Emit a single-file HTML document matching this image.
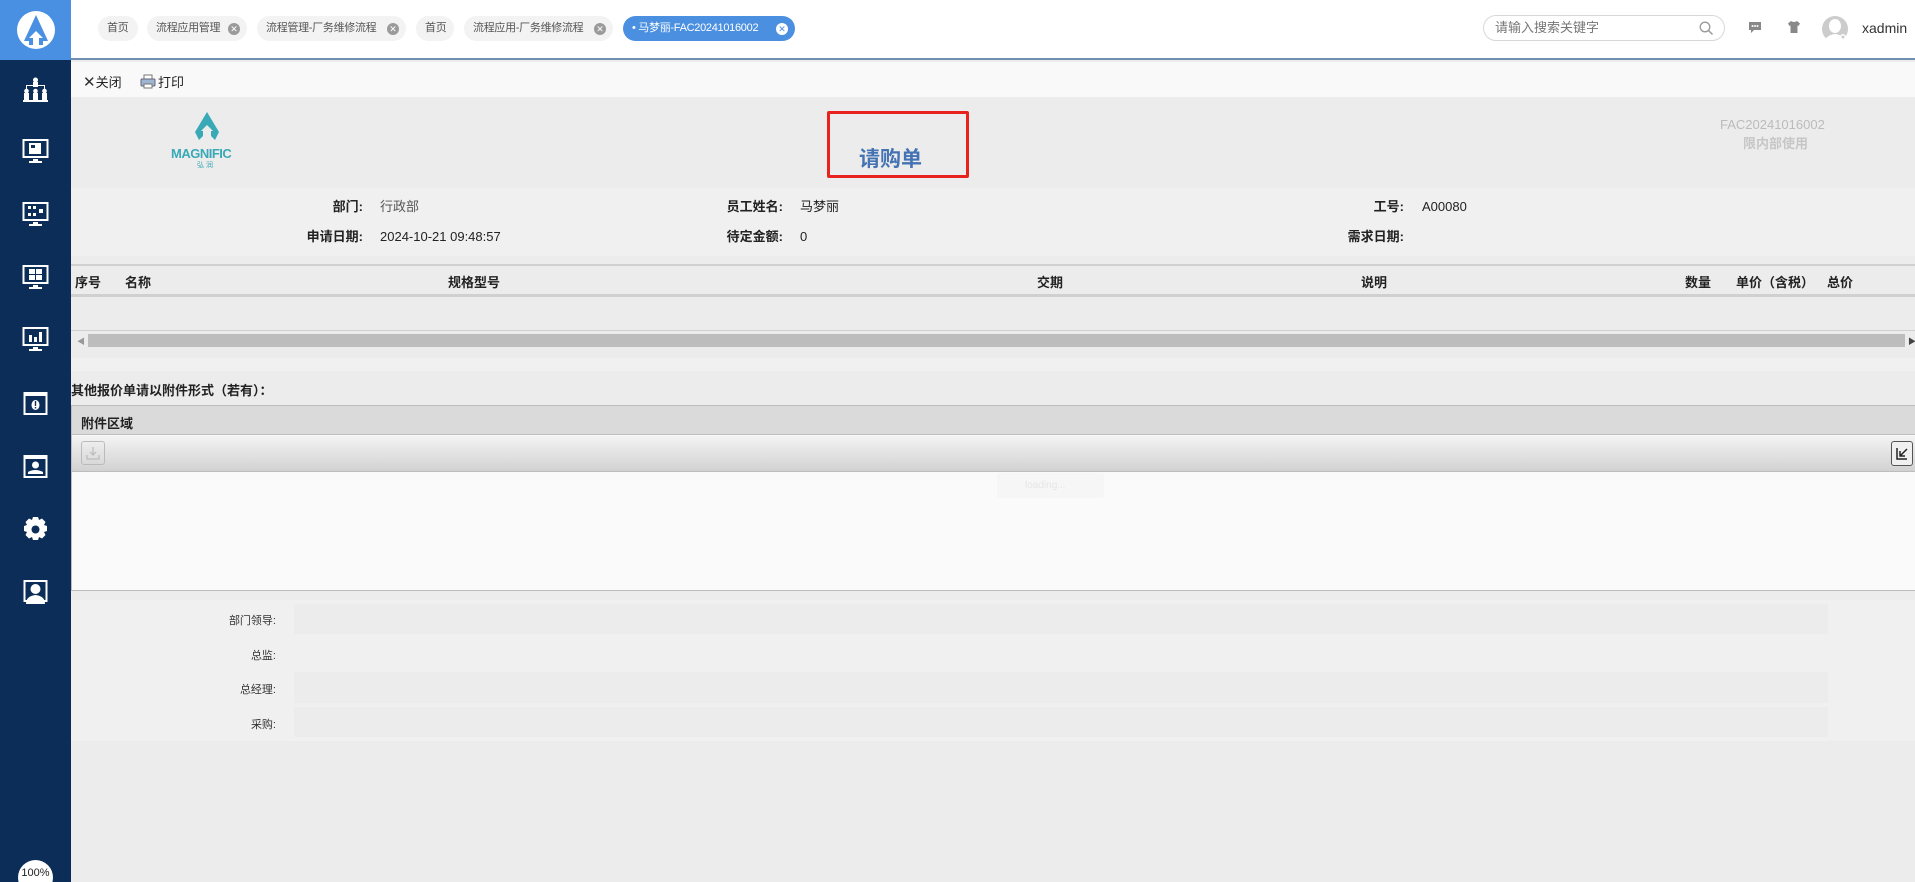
<!DOCTYPE html>
<html style="background:#ececec"><head><meta charset="utf-8">
<style>
*{margin:0;padding:0;box-sizing:border-box}
html,body{width:1915px;height:882px;overflow:hidden}
body{background:#ececec;font-family:"Liberation Sans","Noto Sans CJK SC",sans-serif;font-size:13px;color:#222;position:relative}
.abs{position:absolute}
#side{left:0;top:0;width:71px;height:882px;background:#0b2d57}
#logo{left:0;top:0;width:71px;height:60px;background:#4a90e2}
#top{left:71px;top:0;width:1844px;height:60px;background:#fff;border-bottom:2px solid #6f8fb3}
.tab{position:absolute;top:16px;height:25px;border-radius:13px;background:#f3f3f3;color:#555;font-size:11px;line-height:25px;padding-left:9px;white-space:nowrap;letter-spacing:-0.3px}
.tab .x{position:absolute;right:7px;top:7px;width:12px;height:12px;border-radius:6px;background:#9a9a9a;color:#fff;font-size:9px;line-height:12px;text-align:center;letter-spacing:0}
.tab.act{background:#4a8fe0;color:#fff}
.tab.act .x{background:#fff;color:#4a8fe0}
.ico{position:absolute;left:22px;width:27px;height:27px}
.lbl{position:absolute;font-weight:bold;text-align:right;font-size:13px;line-height:16px}
.val{position:absolute;font-size:13px;line-height:16px}
.th{position:absolute;top:272px;font-weight:bold;font-size:13px}
.ap{position:absolute;right:1639px;font-size:11px;color:#333;text-align:right}
.box{position:absolute;left:294px;width:1534px;background:#ececec}
</style></head><body>
<div id="side" class="abs"></div>
<div id="logo" class="abs">
<svg class="abs" style="left:15px;top:9px" width="42" height="42" viewBox="0 0 42 42"><circle cx="21" cy="21" r="19" fill="#fff"/><path d="M21 6 L33 32 L28 32 L28 36 L14 36 L14 32 L9 32 Z" fill="#4a90e2"/><path d="M21 22 L28 29 L24 29 L24 36 L18 36 L18 29 L14 29 Z" fill="#fff"/></svg>
</div>
<svg class="ico" style="top:76px" viewBox="0 0 27 27" fill="#fff"><circle cx="13.5" cy="4" r="2.5"/><rect x="11" y="6" width="5" height="5"/><path d="M4 9h19v4h-1v-3H5v3H4z"/><circle cx="4.5" cy="15" r="2.3"/><circle cx="13.5" cy="15" r="2.3"/><circle cx="22.5" cy="15" r="2.3"/><rect x="2" y="17" width="5" height="7"/><rect x="11" y="17" width="5" height="7"/><rect x="20" y="17" width="5" height="7"/><rect x="1" y="24" width="25" height="2"/></svg>
<svg class="ico" style="top:138px" viewBox="0 0 27 27"><rect x="1.5" y="2" width="24" height="17" fill="none" stroke="#fff" stroke-width="2"/><rect x="7" y="5" width="12" height="11" fill="#fff"/><rect x="9" y="7" width="4" height="3" fill="#0b2d57"/><rect x="11" y="21" width="5" height="2" fill="#fff"/><rect x="7" y="23" width="13" height="2" fill="#fff"/></svg>
<svg class="ico" style="top:201px" viewBox="0 0 27 27" fill="#fff"><rect x="1.5" y="2" width="24" height="17" fill="none" stroke="#fff" stroke-width="2"/><rect x="6" y="5" width="3" height="3"/><rect x="11" y="5" width="3" height="3"/><rect x="6" y="12" width="3" height="3"/><rect x="11" y="12" width="3" height="3"/><rect x="17" y="8" width="4" height="4"/><rect x="11" y="21" width="5" height="2"/><rect x="7" y="23" width="13" height="2"/></svg>
<svg class="ico" style="top:264px" viewBox="0 0 27 27" fill="#fff"><rect x="1.5" y="2" width="24" height="17" fill="none" stroke="#fff" stroke-width="2"/><rect x="7" y="5" width="6" height="5"/><rect x="14" y="5" width="6" height="5"/><rect x="7" y="11" width="6" height="5"/><rect x="14" y="11" width="6" height="5"/><rect x="11" y="21" width="5" height="2"/><rect x="7" y="23" width="13" height="2"/></svg>
<svg class="ico" style="top:326px" viewBox="0 0 27 27" fill="#fff"><rect x="1.5" y="2" width="24" height="17" fill="none" stroke="#fff" stroke-width="2"/><rect x="7" y="9" width="3" height="7"/><rect x="12" y="11" width="3" height="5"/><rect x="17" y="6" width="3" height="10"/><rect x="11" y="21" width="5" height="2"/><rect x="7" y="23" width="13" height="2"/></svg>
<svg class="ico" style="top:390px" viewBox="0 0 27 27" fill="#fff"><rect x="2.5" y="3" width="22" height="21" fill="none" stroke="#fff" stroke-width="2"/><rect x="2" y="3" width="23" height="3"/><ellipse cx="13.5" cy="15" rx="4" ry="5"/><rect x="12.8" y="11" width="1.4" height="5" fill="#0b2d57"/><rect x="12.8" y="17" width="1.4" height="1.5" fill="#0b2d57"/></svg>
<svg class="ico" style="top:453px" viewBox="0 0 27 27" fill="#fff"><rect x="2.5" y="3" width="22" height="21" fill="none" stroke="#fff" stroke-width="2"/><rect x="2" y="3" width="23" height="3"/><circle cx="13.5" cy="12" r="3.5"/><path d="M6 19 q7 -4 15 0 l0 2 h-15z"/></svg>
<svg class="ico" style="top:516px" viewBox="0 0 27 27" fill="#fff"><path d="M11 1h5l1 3 3-1.5 3.5 3.5-1.5 3 3 1v5l-3 1 1.5 3-3.5 3.5-3-1.5-1 3h-5l-1-3-3 1.5-3.5-3.5 1.5-3-3-1v-5l3-1-1.5-3 3.5-3.5 3 1.5z"/><circle cx="13.5" cy="13.5" r="4" fill="#0b2d57"/></svg>
<svg class="ico" style="top:579px" viewBox="0 0 27 27" fill="#fff"><rect x="2.5" y="2" width="22" height="20" fill="none" stroke="#fff" stroke-width="2"/><circle cx="13.5" cy="10" r="5"/><path d="M4 25 q0-8 9.5-9 q9.5 1 9.5 9z"/></svg>
<div class="abs" style="left:18px;top:860px;width:35px;height:35px;border-radius:50%;background:#fff;color:#222;font-size:11px;text-align:center;line-height:26px">100%</div>

<div id="top" class="abs">
<div class="tab" style="left:27px;width:40px">首页</div>
<div class="tab" style="left:76px;width:100px">流程应用管理<span class="x">✕</span></div>
<div class="tab" style="left:186px;width:149px">流程管理-厂务维修流程<span class="x">✕</span></div>
<div class="tab" style="left:345px;width:38px">首页</div>
<div class="tab" style="left:393px;width:149px">流程应用-厂务维修流程<span class="x">✕</span></div>
<div class="tab act" style="left:552px;width:172px">• 马梦丽-FAC20241016002<span class="x">✕</span></div>
<div class="abs" style="left:1412px;top:15px;width:242px;height:26px;border:1px solid #d8d8d8;border-radius:13px;color:#777;font-size:13px;line-height:24px;padding-left:11px">请输入搜索关键字
<svg class="abs" style="right:10px;top:5px" width="15" height="15" viewBox="0 0 15 15"><circle cx="6" cy="6" r="4.8" fill="none" stroke="#999" stroke-width="1.3"/><path d="M9.5 9.5 L13.5 13.5" stroke="#999" stroke-width="1.5"/></svg></div>
<svg class="abs" style="left:1677px;top:21px" width="14" height="13" viewBox="0 0 14 13"><path d="M1 1h12v8H6l-3 3V9H1z" fill="#888"/><circle cx="4.5" cy="5" r="1" fill="#fff"/><circle cx="7" cy="5" r="1" fill="#fff"/><circle cx="9.5" cy="5" r="1" fill="#fff"/></svg>
<svg class="abs" style="left:1716px;top:20px" width="14" height="14" viewBox="0 0 14 14"><path d="M4 1 L1 3.5 L2.5 6 L3.5 5.5 V13 H10.5 V5.5 L11.5 6 L13 3.5 L10 1 Q7 3 4 1z" fill="#888"/></svg>
<svg class="abs" style="left:1750px;top:15px" width="28" height="28" viewBox="0 0 28 28"><circle cx="14" cy="14" r="13" fill="#ccc"/><ellipse cx="14" cy="11" rx="6" ry="7" fill="#fff"/><path d="M4 24 q10-10 20 0 q-10 8-20 0z" fill="#fff"/><circle cx="22" cy="22" r="3" fill="#fff"/><circle cx="22" cy="22" r="1.5" fill="#ccc"/></svg>
<div class="abs" style="left:1791px;top:20px;font-size:14px;color:#333">xadmin</div>
</div>

<div class="abs" style="left:71px;top:62px;width:1844px;height:35px;background:#f9f9f9"></div>
<div class="abs" style="left:83px;top:72px;font-size:13px;color:#222"><span style="font-size:15px;color:#333">✕</span>关闭</div>
<svg class="abs" style="left:140px;top:74px" width="16" height="15" viewBox="0 0 16 15"><rect x="4" y="1" width="8" height="5" fill="#fff" stroke="#777"/><rect x="1" y="5" width="14" height="7" rx="1" fill="#9fb6d3" stroke="#667"/><rect x="4" y="10" width="8" height="4" fill="#fff" stroke="#777"/></svg>
<div class="abs" style="left:158px;top:72px;font-size:13px">打印</div>

<div class="abs" style="left:71px;top:97px;width:1844px;height:91px;background:#ececec"></div>
<svg class="abs" style="left:193px;top:112px" width="28" height="31" viewBox="0 0 28 31"><path d="M14 0 L26 20 L22 28 L18 24 L18 19 L20 19 L14 13 L8 19 L10 19 L10 24 L6 28 L2 20 Z" fill="#3aa9b7"/></svg>
<div class="abs" style="left:171px;top:146px;width:70px;font-size:13px;font-weight:bold;color:#3aa9b7;letter-spacing:-0.5px">MAGNIFIC</div>
<div class="abs" style="left:197px;top:160px;font-size:7px;color:#3aa9b7">弘 润</div>
<div class="abs" style="left:827px;top:111px;width:142px;height:67px;border:3px solid #e8231e;border-radius:2px"></div>
<div class="abs" style="left:859px;top:143px;font-size:21px;font-weight:bold;color:#4473b3">请购单</div>
<div class="abs" style="left:1720px;top:117px;font-size:13px;color:#bbb">FAC20241016002</div>
<div class="abs" style="left:1743px;top:133px;font-size:13px;font-weight:bold;color:#c6c6c6">限内部使用</div>

<div class="abs" style="left:71px;top:188px;width:1844px;height:68px;background:#f0f0f0"></div>
<div class="lbl" style="right:1552px;top:199px">部门:</div><div class="val" style="left:380px;top:199px;color:#555">行政部</div>
<div class="lbl" style="right:1132px;top:199px">员工姓名:</div><div class="val" style="left:800px;top:199px">马梦丽</div>
<div class="lbl" style="right:511px;top:199px">工号:</div><div class="val" style="left:1422px;top:199px">A00080</div>
<div class="lbl" style="right:1552px;top:229px">申请日期:</div><div class="val" style="left:380px;top:229px">2024-10-21 09:48:57</div>
<div class="lbl" style="right:1132px;top:229px">待定金额:</div><div class="val" style="left:800px;top:229px">0</div>
<div class="lbl" style="right:511px;top:229px">需求日期:</div>

<div class="abs" style="left:71px;top:264px;width:1844px;height:33px;background:#ececec;border-top:2px solid #d0d0d0;border-bottom:3px solid #d0d0d0"></div>
<div class="th" style="left:75px">序号</div><div class="th" style="left:125px">名称</div><div class="th" style="left:448px">规格型号</div><div class="th" style="left:1037px">交期</div><div class="th" style="left:1361px">说明</div><div class="th" style="left:1685px">数量</div><div class="th" style="left:1736px">单价（含税）</div><div class="th" style="left:1827px">总价</div>
<div class="abs" style="left:71px;top:330px;width:1844px;height:1px;background:#d0d0d0"></div>
<div class="abs" style="left:77px;top:336px;font-size:8px;color:#999">◀</div>
<div class="abs" style="left:88px;top:334px;width:1817px;height:13px;background:#bdbdbd"></div>
<div class="abs" style="left:1908px;top:336px;font-size:8px;color:#444">▶</div>
<div class="abs" style="left:71px;top:358px;width:1844px;height:13px;background:#f0f0f0"></div>

<div class="abs" style="left:71px;top:380px;font-weight:bold;font-size:13px">其他报价单请以附件形式（若有）：</div>
<div class="abs" style="left:71px;top:405px;width:1844px;height:186px;border:1px solid #bdbdbd;border-right:none;background:#fafafa"></div>
<div class="abs" style="left:72px;top:406px;width:1843px;height:29px;background:#dadada;border-bottom:1px solid #bdbdbd"></div>
<div class="abs" style="left:81px;top:413px;font-weight:bold;font-size:13px">附件区域</div>
<div class="abs" style="left:72px;top:436px;width:1843px;height:36px;background:linear-gradient(#f3f3f3,#d2d2d2);border-bottom:1px solid #bdbdbd"></div>
<div class="abs" style="left:81px;top:441px;width:24px;height:24px;border:1px solid #bbb;border-radius:3px"></div>
<svg class="abs" style="left:86px;top:446px" width="14" height="14" viewBox="0 0 14 14"><path d="M7 1v8M4 6l3 3 3-3M1 9v4h12V9" fill="none" stroke="#bbb" stroke-width="1.2"/></svg>
<div class="abs" style="left:1891px;top:441px;width:22px;height:25px;border:1px solid #555;border-radius:3px;background:#f0f0f0"></div>
<svg class="abs" style="left:1895px;top:446px" width="14" height="15" viewBox="0 0 14 15"><path d="M2 2v11h10M12 3L5 10M5 5v5h5" fill="none" stroke="#222" stroke-width="1.5"/></svg>
<div class="abs" style="left:997px;top:473px;width:107px;height:25px;background:#f6f6f6;border-radius:3px;color:#e6e6e6;font-size:10px;line-height:25px;padding-left:28px">loading...</div>

<div class="abs" style="left:71px;top:600px;width:1844px;height:141px;background:#f0f0f0"></div>
<div class="box" style="top:604px;height:30px"></div>
<div class="box" style="top:672px;height:31px"></div>
<div class="box" style="top:707px;height:30px"></div>
<div class="ap" style="top:612px">部门领导:</div>
<div class="ap" style="top:647px">总监:</div>
<div class="ap" style="top:681px">总经理:</div>
<div class="ap" style="top:716px">采购:</div>
</body></html>
